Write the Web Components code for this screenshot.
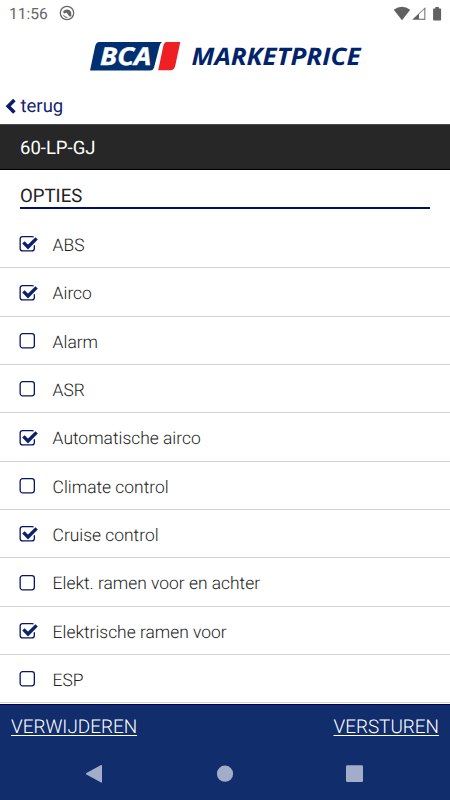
<!DOCTYPE html>
<html lang="nl">
<head>
<meta charset="utf-8">
<title>BCA Marketprice</title>
<style>
html,body{margin:0;padding:0;background:#fff}
body{font-family:Roboto,"Liberation Sans",sans-serif;width:450px;height:800px;overflow:hidden;text-rendering:geometricPrecision}
</style>
</head>
<body>
<market-app></market-app>
<script>
const define = (name, html) => customElements.define(name, class extends HTMLElement {
  constructor() {
    super();
    this.attachShadow({ mode: "open" }).innerHTML = html;
  }
});

define("status-bar", `
<style>
:host{display:flex;height:28px;align-items:center;justify-content:space-between;padding:0 7px 0 9px;box-sizing:border-box;color:#666}
.left{display:flex;align-items:center;gap:11px;font-size:15.6px;line-height:26px}
svg{display:block}
.left svg{margin-top:-2px}
</style>
<div class="left"><span>11:56</span>
<svg width="16" height="16" viewBox="0 0 16 16"><circle cx="8" cy="8" r="6.7" fill="none" stroke="#666" stroke-width="1.3"/><path d="M3.8 7.2A4.5 4.5 0 0 1 12.2 7.5L12.4 11 10.7 11.8 7.5 7.6 5.7 8.6z" fill="#666"/><path d="M4.3 9.8A4.3 4.3 0 0 0 8.5 12.5" fill="none" stroke="#666" stroke-width="1"/></svg></div>
<svg width="50" height="16" viewBox="393 5 50 16" fill="#616161"><path d="M393.7 8.8Q402 2.8 410.2 8.8L402 19.3z"/><path d="M425.3 6.2V18.7H412.2z"/><path d="M419 13.2L424.4 8V17.8H419z" fill="#fff"/><path d="M433.8 7.4H435.4V6H438.8V7.4H440.4Q441.1 7.4 441.1 8.2V18.8Q441.1 19.5 440.4 19.5H433.8Q433.1 19.5 433.1 18.8V8.2Q433.1 7.4 433.8 7.4z"/></svg>`);

define("brand-logo", `
<style>
:host{display:flex;height:59px;align-items:flex-start;justify-content:center}
svg{display:block}
text{font-family:"Open Sans","Noto Sans",sans-serif;font-style:italic;font-weight:700}
</style>
<svg width="450" height="59" viewBox="0 28 450 59">
<path d="M99.2 42H162Q160.4 43.2 159.5 46L154.2 67Q153.2 70.6 150 70.6H90L95 47Q96 42 99.2 42z" fill="#003070"/>
<path d="M166.5 42H180.3L175.3 65.5Q174.3 70.3 170.5 70.3H158.2L163.2 46.5Q164.1 42.2 166.5 42z" fill="#ee2024"/>
<text x="100" y="65.3" font-size="24.5" textLength="51.5" lengthAdjust="spacingAndGlyphs" fill="#fff" stroke="#fff" stroke-width=".4">BCA</text>
<text x="191.5" y="65" font-size="24" textLength="169" lengthAdjust="spacingAndGlyphs" fill="#00246b">MARKETPRICE</text>
</svg>`);

define("back-link", `
<style>
:host{display:flex;height:37px;align-items:center;color:#15256e;font-size:18.5px;padding-left:5px;box-sizing:border-box}
svg{display:block;margin-right:3.5px}
span{line-height:37px;padding-top:1px}
</style>
<svg width="12" height="18" viewBox="0 0 12 18"><path d="M9.4 3L3.2 9.3 9.4 15.6" fill="none" stroke="#0b1d68" stroke-width="3.6"/></svg><span><slot></slot></span>`);

define("plate-bar", `
<style>
:host{display:flex;height:46px;align-items:center;background:#272727;border-top:1px solid #4b4b4b;border-bottom:1px solid #000;box-sizing:border-box;padding:2px 0 0 20px;color:#fff;font-size:18.5px}
</style><span><slot></slot></span>`);

define("section-title", `
<style>
:host{display:block;margin:0 20px;height:39px;box-sizing:border-box;border-bottom:2px solid #001068;padding-top:16px;font-size:18.6px;line-height:21px;color:#222}
</style><slot></slot>`);

define("option-row", `
<style>
:host{display:flex;height:48.35px;box-sizing:border-box;align-items:center;border-bottom:1px solid #d4d4d4;padding:4.6px 0 0 19px;font-size:17.42px;font-weight:300;color:#222}
svg{display:block;flex:none;margin:-3.2px 14.6px 0 0}
#tick,#on{display:none}
:host([checked]) #tick,:host([checked]) #on{display:inline}
:host([checked]) #off{display:none}
</style>
<svg width="19" height="18" viewBox="0 0 19 18" fill="none" stroke="#061565" stroke-width="1.3">
<rect id="off" x="1.15" y="1.65" width="14.2" height="14.2" rx="2.5"/>
<path id="on" d="M14.6 1.9Q14 1.65 12.8 1.65H3.6Q1.15 1.65 1.15 4.1V13.4Q1.15 15.85 3.6 15.85H12.9Q15.35 15.85 15.35 13.4V10.2"/>
<path id="tick" d="M4.4 7.4L9 12 17.6 3.4" stroke="#0b2469" stroke-width="3.4"/>
</svg><span><slot></slot></span>`);

define("action-bar", `
<style>
:host{display:flex;height:46px;box-sizing:border-box;justify-content:space-between;padding:11px 11px 0;color:#fff;font-size:18.9px;font-weight:300;line-height:22px;border-top:1px solid #000055}
::slotted(span){text-decoration:underline;text-decoration-thickness:1px;text-underline-offset:2px}
</style><slot></slot>`);

define("nav-bar", `
<style>
:host{display:block;height:50px}
svg{display:block}
</style>
<svg width="450" height="50" viewBox="0 750 450 50" fill="#a2adc9"><path d="M86.4 773.1L101.1 765Q102 764.6 102 765.6V782.1Q102 783.1 101.1 782.6L86.4 774.5Q85.5 773.8 86.4 773.1z"/><circle cx="225" cy="773.7" r="8.1"/><rect x="346" y="765.2" width="17" height="16.8" rx="1.2"/></svg>`);

const options = [["ABS",1],["Airco",1],["Alarm",0],["ASR",0],["Automatische airco",1],["Climate control",0],["Cruise control",1],["Elekt. ramen voor en achter",0],["Elektrische ramen voor",1],["ESP",0]];
define("market-app", `
<style>
:host{display:flex;flex-direction:column;width:450px;height:800px;background:#fff}
.list{height:495px;padding-top:11px;box-sizing:border-box;flex:none;overflow:hidden}
.foot{background:#112d6c}
</style>
<status-bar></status-bar><brand-logo></brand-logo><back-link>terug</back-link>
<plate-bar>60-LP-GJ</plate-bar><section-title>OPTIES</section-title>
<div class="list">${options.map(([t, c]) => `<option-row${c ? " checked" : ""}>${t}</option-row>`).join("")}</div>
<div class="foot"><action-bar><span>VERWIJDEREN</span><span>VERSTUREN</span></action-bar><nav-bar></nav-bar></div>`);
</script>
</body>
</html>
